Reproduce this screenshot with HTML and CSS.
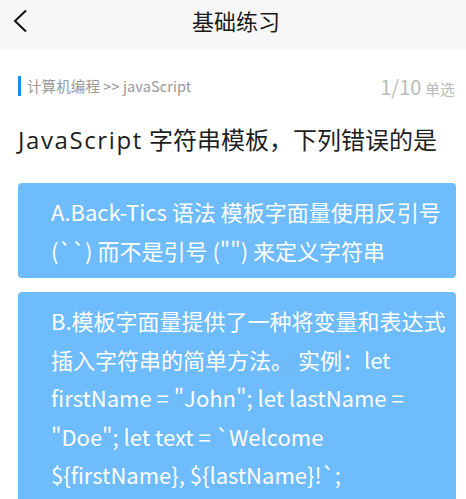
FILE: index.html
```html
<!DOCTYPE html>
<html lang="zh-CN">
<head>
<meta charset="utf-8">
<title>基础练习</title>
<link rel="stylesheet" href="styles.css">
</head>
<body>
<header class="topbar">
  <span class="back" aria-label="返回">
    <svg width="16" height="24" viewBox="0 0 16 24"><path d="M14 1.5 L3 12 L14 22.5" fill="none" stroke="#111" stroke-width="2"/></svg>
  </span>
  <h1 class="title">基础练习</h1>
  <span class="spacer"></span>
</header>
<main class="content">
  <div class="crumbs">
    <span class="path">计算机编程 &gt;&gt; javaScript</span>
    <span class="progress"><span class="num">1/10</span> <span class="kind">单选</span></span>
  </div>
  <p class="question"><span class="latin">JavaScript</span> 字符串模板，下列错误的是</p>
  <div class="option">A.Back-Tics 语法 模板字面量使用反引号 (``) 而不是引号 ("") 来定义字符串</div>
  <div class="option">B.模板字面量提供了一种将变量和表达式插入字符串的简单方法。 实例：let firstName = "John"; let lastName = "Doe"; let text = `Welcome ${firstName}, ${lastName}!`;</div>
</main>
</body>
</html>
```
FILE: styles.css
```css
html, body {
  margin: 0;
  padding: 0;
  background: #fff;
  font-family: "Noto Sans CJK SC", "Noto Sans", sans-serif;
}
.topbar {
  height: 50px;
  background: #f7f7f7;
  display: grid;
  grid-template-columns: 60px 1fr 60px;
  align-items: center;
}
.back {
  display: flex;
  align-items: center;
  padding-left: 12px;
  height: 50px;
  margin-top: -8px;
}
.title {
  margin: 0;
  text-align: center;
  font-size: 22px;
  font-weight: 400;
  color: #1a1a1a;
  margin-top: -10px;
  padding-left: 6px;
}
.content {
  padding: 0 10px 0 18px;
}
.crumbs {
  margin-top: 25px;
  display: flex;
  justify-content: space-between;
  align-items: center;
  height: 22px;
}
.path {
  border-left: 3px solid #1a8fe6;
  padding-left: 6px;
  font-size: 14.5px;
  line-height: 20px;
  color: #999;
  letter-spacing: 0.1px;
}
.progress {
  color: #bbb;
  padding-right: 1px;
}
.num {
  font-size: 20px;
}
.kind {
  font-size: 15px;
}
.question {
  margin: 25px 0 0 0;
  font-family: "Open Sans", "Noto Sans CJK SC", sans-serif;
  font-size: 24px;
  line-height: 36px;
  color: #1e1e1e;
}
.latin {
  letter-spacing: 1.6px;
}
.option {
  margin-top: 14px;
  background: #6fbcfd;
  border-radius: 4px;
  color: #fff;
  font-size: 22px;
  line-height: 38.5px;
  padding: 9px 6px 9px 33px;
}
.question + .option {
  margin-top: 25px;
}
```
